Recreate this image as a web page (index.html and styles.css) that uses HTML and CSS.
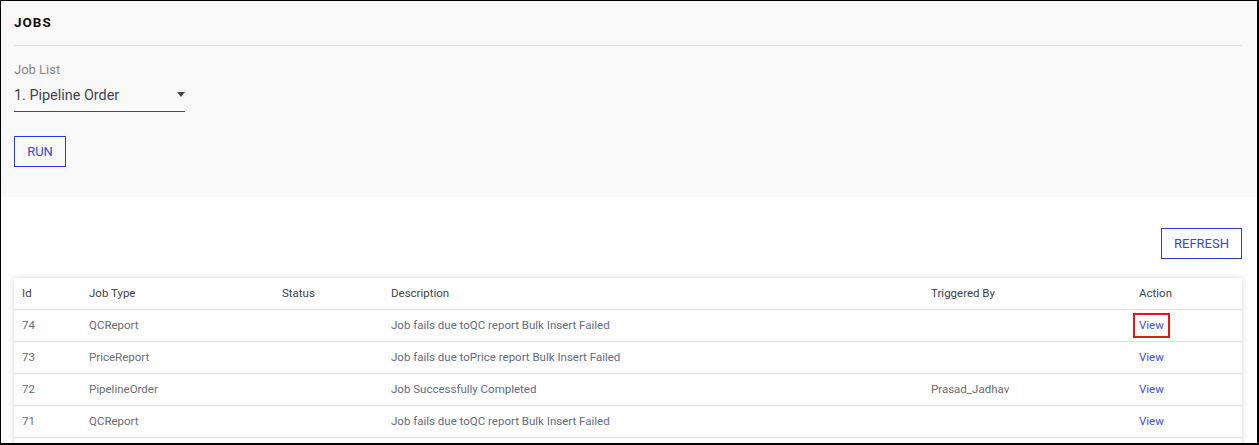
FILE: index.html
```html
<!DOCTYPE html>
<html lang="en">
<head>
<meta charset="utf-8">
<title>Jobs</title>
<link rel="stylesheet" href="styles.css">
</head>
<body>
<div class="frame">
  <section class="panel">
    <h1 class="title">JOBS</h1>
    <div class="rule"></div>
    <div class="field-label">Job List</div>
    <div class="select">
      <span class="select-value">1. Pipeline Order</span>
      <span class="caret"></span>
    </div>
    <button class="btn btn-run" type="button">RUN</button>
  </section>
  <div class="toolbar">
    <button class="btn btn-refresh" type="button">REFRESH</button>
  </div>
  <div class="card">
    <table class="jobs">
      <colgroup>
        <col class="c-id"><col class="c-type"><col class="c-status"><col class="c-desc"><col class="c-trig"><col class="c-act">
      </colgroup>
      <thead>
        <tr><th>Id</th><th>Job Type</th><th>Status</th><th>Description</th><th>Triggered By</th><th>Action</th></tr>
      </thead>
      <tbody>
        <tr><td>74</td><td>QCReport</td><td></td><td class="desc">Job fails due toQC report Bulk Insert Failed</td><td></td><td><a class="view hl" href="#">View</a></td></tr>
        <tr><td>73</td><td>PriceReport</td><td></td><td class="desc">Job fails due toPrice report Bulk Insert Failed</td><td></td><td><a class="view" href="#">View</a></td></tr>
        <tr><td>72</td><td>PipelineOrder</td><td></td><td class="desc">Job Successfully Completed</td><td>Prasad_Jadhav</td><td><a class="view" href="#">View</a></td></tr>
        <tr><td>71</td><td>QCReport</td><td></td><td class="desc">Job fails due toQC report Bulk Insert Failed</td><td></td><td><a class="view" href="#">View</a></td></tr>
      </tbody>
    </table>
  </div>
</div>
</body>
</html>
```
FILE: styles.css
```css
html, body {
  margin: 0;
  padding: 0;
  background: #fff;
}
body {
  font-family: Roboto, "Liberation Sans", Arial, sans-serif;
  color: #555;
}
.frame {
  box-sizing: border-box;
  width: 1259px;
  height: 445px;
  border-left: 1px solid #000;
  border-top: 1px solid #000;
  border-right: 2px solid #000;
  border-bottom: 2px solid #000;
  overflow: hidden;
  background: #fff;
}
.panel {
  box-sizing: border-box;
  height: 196px;
  background: #f9f9f9;
  padding: 13px 15px 0 13px;
}
.title {
  margin: 0;
  font-size: 13.5px;
  line-height: 16px;
  font-weight: 700;
  letter-spacing: 1px;
  color: #111;
}
.rule {
  margin-top: 15px;
  height: 1px;
  background: #dcdcdc;
}
.field-label {
  margin-top: 16px;
  font-size: 13px;
  line-height: 16px;
  color: #888;
}
.select {
  margin-top: 8px;
  width: 171px;
  display: flex;
  align-items: center;
  justify-content: space-between;
  border-bottom: 1px solid #4a4a5e;
  padding-bottom: 5px;
}
.select-value {
  font-size: 14.4px;
  line-height: 20px;
  color: #444450;
}
.caret {
  width: 0;
  height: 0;
  border-left: 4.5px solid transparent;
  border-right: 4.5px solid transparent;
  border-top: 5px solid #444450;
  margin-top: -3px;
}
.btn {
  display: block;
  box-sizing: border-box;
  height: 31px;
  background: #fff;
  border: 1px solid #2c3ad9;
  color: #3a48d6;
  font-family: Roboto, "Liberation Sans", Arial, sans-serif;
  font-size: 13px;
  padding: 0;
  cursor: pointer;
}
.btn-run {
  margin-top: 24px;
  width: 52px;
  background: transparent;
}
.toolbar {
  display: flex;
  justify-content: flex-end;
  padding: 31px 15px 0 13px;
}
.btn-refresh {
  width: 81px;
}
.card {
  margin: 19px 15px 0 13px;
  padding-bottom: 40px;
  background: #fff;
  box-shadow: 0 0 6px rgba(0, 0, 0, 0.16);
}
.jobs {
  width: 100%;
  table-layout: fixed;
  border-collapse: separate;
  border-spacing: 0;
}
.c-id { width: 67px; }
.c-type { width: 193px; }
.c-status { width: 109px; }
.c-desc { width: 540px; }
.c-trig { width: 208px; }
.c-act { width: 111px; }
.jobs th,
.jobs td {
  padding: 0 8px;
  height: 31px;
  line-height: 31px;
  border-bottom: 1px solid #dedede;
  text-align: left;
  white-space: nowrap;
  font-size: 11.5px;
  vertical-align: middle;
}
.jobs th {
  font-weight: 400;
  color: #3f3f4a;
}
.jobs td {
  color: #6c6c74;
}
.jobs td.desc {
  color: #636a86;
}
.view {
  color: #4150d4;
  text-decoration: none;
}
.hl {
  display: inline-block;
  border: 2px solid #e8141a;
  padding: 0 4px;
  line-height: 21px;
  margin-left: -6px;
  vertical-align: middle;
}
```
